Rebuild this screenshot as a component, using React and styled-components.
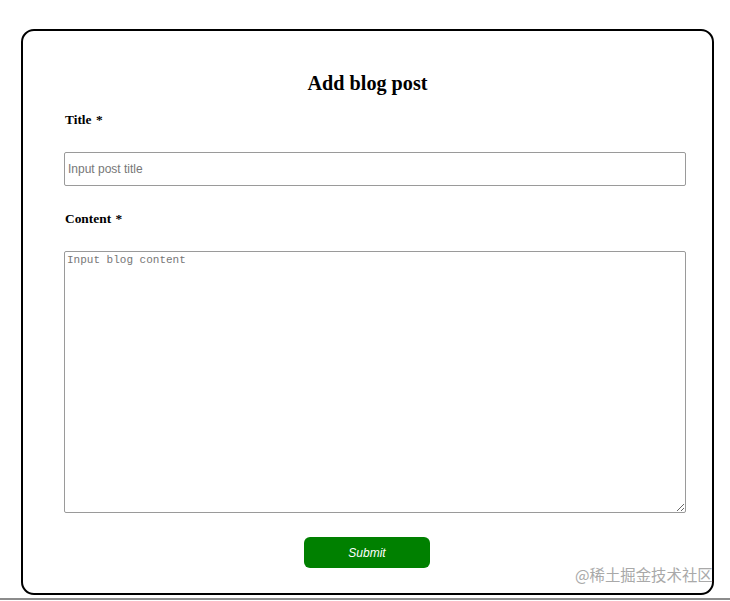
import React from "react";
import styled, { createGlobalStyle } from "styled-components";

const Global = createGlobalStyle`
  html, body { margin: 0; padding: 0; background: #fff; }
  body { font-family: "Liberation Serif", "Times New Roman", serif; }
`;

const Page = styled.div`
  position: relative;
  width: 730px;
  height: 601px;
  padding-top: 29px;
  box-sizing: border-box;
  overflow: hidden;
`;

const Card = styled.form`
  box-sizing: border-box;
  margin-left: 21px;
  width: 693px;
  height: 566px;
  border: 2px solid #000;
  border-radius: 13px;
  padding: 39px 25px 0 41px;
  display: flex;
  flex-direction: column;
`;

const Heading = styled.h2`
  margin: 0;
  font-size: 20.2px;
  line-height: 26px;
  font-weight: bold;
  text-align: center;
  color: #000;
  padding-right: 16px;
`;

const Label = styled.label`
  display: block;
  font-size: 13.4px;
  line-height: 16px;
  font-weight: bold;
  color: #000;
  margin-top: ${(p) => p.$top}px;
  margin-left: 1px;
  word-spacing: 1px;
`;

const TextInput = styled.input`
  box-sizing: border-box;
  margin-top: ${(p) => p.$top}px;
  height: 34px;
  width: 622px;
  border: 1px solid #9a9a9a;
  border-radius: 2px;
  padding: 0 3px;
  font-family: "Liberation Sans", Arial, sans-serif;
  font-size: 12px;
  outline: none;
  &::placeholder { color: #777; }
`;

const TextArea = styled.textarea`
  box-sizing: border-box;
  margin-top: ${(p) => p.$top}px;
  height: 262px;
  width: 622px;
  border: 1px solid #9a9a9a;
  border-radius: 2px;
  padding: 2px 2px;
  font-family: "Liberation Mono", "Courier New", monospace;
  font-size: 11px;
  resize: vertical;
  outline: none;
  &::placeholder { color: #777; }
`;

const ButtonRow = styled.div`
  display: flex;
  justify-content: center;
  margin-top: 24px;
  padding-right: 17px;
`;

const SubmitButton = styled.button`
  width: 126px;
  height: 31px;
  background: #008000;
  border: none;
  border-radius: 6px;
  color: #fff;
  font-family: "Liberation Sans", Arial, sans-serif;
  font-style: italic;
  font-size: 12px;
  cursor: pointer;
`;

const Watermark = styled.div`
  position: absolute;
  left: 575px;
  top: 564px;
  font-family: "Noto Sans CJK SC", "Liberation Sans", sans-serif;
  font-size: 15.4px;
  line-height: 20px;
  color: #a9a9a9;
  white-space: nowrap;
`;

const BottomRule = styled.div`
  position: absolute;
  left: 0;
  right: 0;
  top: 598px;
  height: 2px;
  background: #8c8c8c;
`;

export default function App() {
  return (
    <>
      <Global />
      <Page>
        <Card onSubmit={(e) => e.preventDefault()}>
          <Heading>Add blog post</Heading>
          <Label $top={16}>Title *</Label>
          <TextInput $top={24} placeholder="Input post title" />
          <Label $top={25}>Content *</Label>
          <TextArea $top={24} placeholder="Input blog content" />
          <ButtonRow>
            <SubmitButton type="submit">Submit</SubmitButton>
          </ButtonRow>
        </Card>
        <Watermark>@稀土掘金技术社区</Watermark>
        <BottomRule />
      </Page>
    </>
  );
}
